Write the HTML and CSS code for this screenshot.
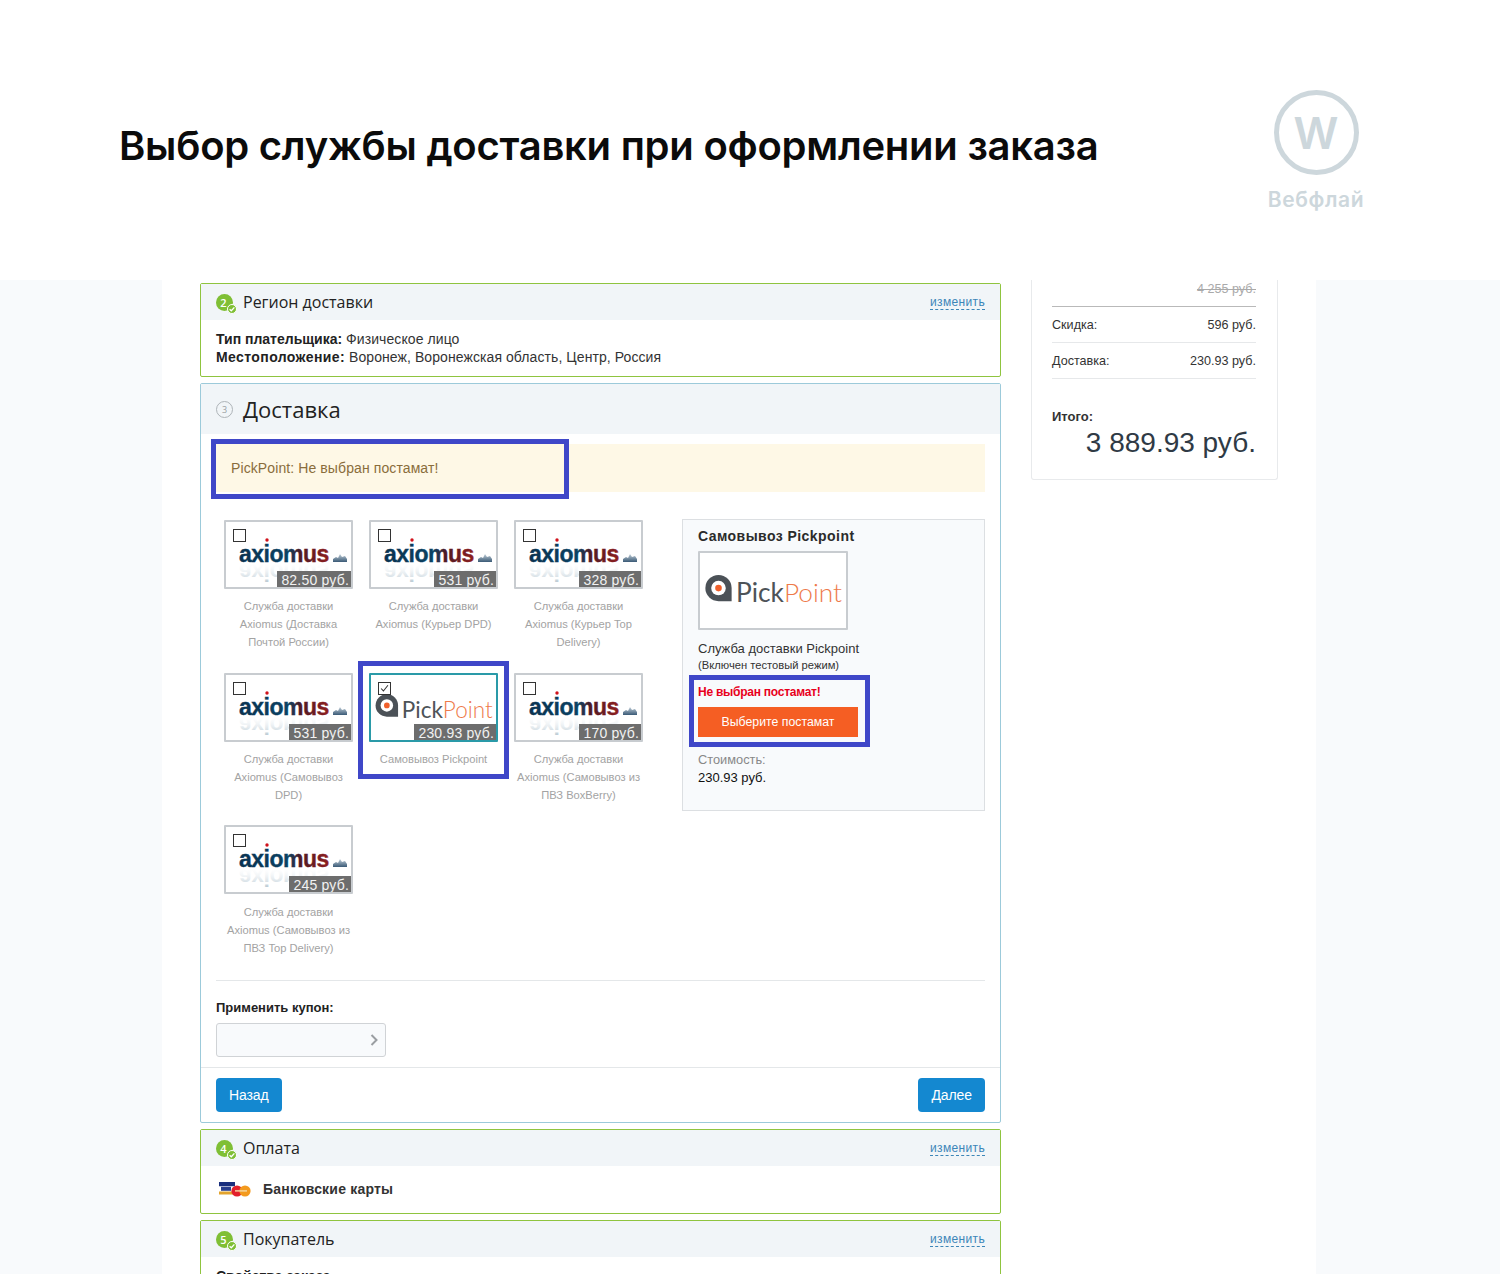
FILE: index.html
```html
<!DOCTYPE html>
<html lang="ru">
<head>
<meta charset="utf-8">
<title>Выбор службы доставки</title>
<link rel="stylesheet" href="styles.css">
</head>
<body>
<svg class="defs" width="0" height="0" aria-hidden="true">
  <defs>
    <linearGradient id="axg" x1="0" y1="0" x2="1" y2="0">
      <stop offset="0" stop-color="#0a3250"/>
      <stop offset=".55" stop-color="#0c4263"/>
      <stop offset=".68" stop-color="#4d1a24"/>
      <stop offset="1" stop-color="#8e1f1f"/>
    </linearGradient>
    <linearGradient id="axr" x1="0" y1="0" x2="0" y2="1">
      <stop offset="0" stop-color="#6b8ea3" stop-opacity=".6"/>
      <stop offset=".9" stop-color="#ffffff" stop-opacity="0"/>
    </linearGradient>
    <linearGradient id="axm" x1="0" y1="0" x2="0" y2="1">
      <stop offset="0" stop-color="#c3d0da"/>
      <stop offset="1" stop-color="#3a5a76"/>
    </linearGradient>
    <symbol id="axiomus" viewBox="0 0 125 65">
      <circle cx="41" cy="18" r="1.7" fill="#d0121b"/>
      <text class="ax-text" x="13" y="40" fill="url(#axg)" stroke="url(#axg)">axiomus</text>
      <text class="ax-text" x="13" y="-42" fill="url(#axr)" transform="scale(1,-1)">axiomus</text>
      <path d="M107 40v-3l3-2 2 1 2-4 2 3 3-1 2 3v3z" fill="url(#axm)"/>
    </symbol>
    <symbol id="pickpoint" viewBox="0 0 150 60">
      <path d="M19 14a13.500 13.500 0 1 0 0 27h13.500V27.500A13.500 13.500 0 0 0 19 14z" fill="#4b5157"/>
      <circle cx="19" cy="27.500" r="7.500" fill="#fff"/>
      <circle cx="19" cy="27.500" r="3.400" fill="#f0602b"/>
      <text class="pp-text" x="37" y="42"><tspan fill="#4d5358">Pick</tspan><tspan class="pp-light" fill="#ee7a4a">Point</tspan></text>
    </symbol>
  </defs>
</svg>
<div class="page">
  <header class="top">
    <h1 class="title">Выбор службы доставки при оформлении заказа</h1>
    <div class="brand">
      <div class="brand-ring"><span class="brand-w">W</span></div>
      <div class="brand-name">Вебфлай</div>
    </div>
  </header>
  <div class="shop">
    <div class="shop-inner">
      <main class="steps">
        <section class="panel done">
          <div class="panel-head">
            <span class="num num-ok">2<i class="ok"><svg viewBox="0 0 8 8"><path d="M1.6 4.2 3.3 5.8 6.4 2.4"/></svg></i></span>
            <span class="head-title">Регион доставки</span>
            <a class="change">изменить</a>
          </div>
          <div class="panel-body region">
            <div><b>Тип плательщика:</b> Физическое лицо</div>
            <div><b class="wide">Местоположение:</b> Воронеж, Воронежская область, Центр, Россия</div>
          </div>
        </section>

        <section class="panel active">
          <div class="panel-head big">
            <span class="num num-off">3</span>
            <span class="head-title">Доставка</span>
          </div>
          <div class="delivery">
            <div class="alert">PickPoint: Не выбран постамат!<span class="mark mark-alert"></span></div>
            <div class="choice">
              <div class="cards">
                <div class="item">
                  <div class="card"><span class="check"></span><svg class="logo"><use href="#axiomus"/></svg><span class="price">82.50 руб.</span></div>
                  <div class="caption">Служба доставки Axiomus (Доставка Почтой России)</div>
                </div>
                <div class="item">
                  <div class="card"><span class="check"></span><svg class="logo"><use href="#axiomus"/></svg><span class="price">531 руб.</span></div>
                  <div class="caption">Служба доставки Axiomus (Курьер DPD)</div>
                </div>
                <div class="item">
                  <div class="card"><span class="check"></span><svg class="logo"><use href="#axiomus"/></svg><span class="price">328 руб.</span></div>
                  <div class="caption">Служба доставки Axiomus (Курьер Top Delivery)</div>
                </div>
                <div class="item">
                  <div class="card"><span class="check"></span><svg class="logo"><use href="#axiomus"/></svg><span class="price">531 руб.</span></div>
                  <div class="caption">Служба доставки Axiomus (Самовывоз DPD)</div>
                </div>
                <div class="item">
                  <div class="card selected"><span class="check"><svg viewBox="0 0 13 13"><path d="M2.5 6.500 5.200 9.400 10.600 2.600"/></svg></span><svg class="logo"><use href="#pickpoint"/></svg><span class="price">230.93 руб.</span></div>
                  <div class="caption">Самовывоз Pickpoint</div>
                  <span class="mark mark-card"></span>
                </div>
                <div class="item">
                  <div class="card"><span class="check"></span><svg class="logo"><use href="#axiomus"/></svg><span class="price">170 руб.</span></div>
                  <div class="caption">Служба доставки Axiomus (Самовывоз из ПВЗ BoxBerry)</div>
                </div>
                <div class="item item-last">
                  <div class="card"><span class="check"></span><svg class="logo"><use href="#axiomus"/></svg><span class="price">245 руб.</span></div>
                  <div class="caption">Служба доставки Axiomus (Самовывоз из ПВЗ Top Delivery)</div>
                </div>
              </div>
              <aside class="info">
                <div class="info-title">Самовывоз Pickpoint</div>
                <div class="info-logo"><svg class="logo-lg"><use href="#pickpoint"/></svg></div>
                <div class="info-desc">Служба доставки Pickpoint</div>
                <div class="info-test">(Включен тестовый режим)</div>
                <div class="info-pick">
                  <div class="info-err">Не выбран постамат!</div>
                  <a class="orange">Выберите постамат</a>
                  <span class="mark mark-pick"></span>
                </div>
                <div class="info-cost">Стоимость:</div>
                <div class="info-sum">230.93 руб.</div>
              </aside>
            </div>
            <div class="coupon">
              <div class="coupon-label">Применить купон:</div>
              <div class="coupon-input"><svg viewBox="0 0 10 14"><path d="M2.500 2 7.500 7 2.500 12"/></svg></div>
            </div>
          </div>
          <div class="nav">
            <a class="btn">Назад</a>
            <a class="btn">Далее</a>
          </div>
        </section>

        <section class="panel done">
          <div class="panel-head">
            <span class="num num-ok">4<i class="ok"><svg viewBox="0 0 8 8"><path d="M1.6 4.2 3.3 5.8 6.4 2.4"/></svg></i></span>
            <span class="head-title">Оплата</span>
            <a class="change">изменить</a>
          </div>
          <div class="panel-body pay">
            <svg class="pay-logo" viewBox="0 0 34 16">
              <rect x="1" y="1" width="16" height="4.500" fill="#1a2f7e"/>
              <rect x="1" y="5.500" width="16" height="5" fill="#fff"/>
              <rect x="1" y="10.500" width="16" height="3" fill="#e2a32c"/>
              <rect x="3" y="5.800" width="10" height="4" fill="#2a3f8e"/>
              <circle cx="19" cy="10" r="5.600" fill="#e2202c"/>
              <circle cx="27" cy="10" r="5.600" fill="#f39a1e"/>
              <rect x="17" y="9.200" width="12" height="1.400" fill="#f6d9a5"/>
            </svg>
            <b>Банковские карты</b>
          </div>
        </section>

        <section class="panel done">
          <div class="panel-head">
            <span class="num num-ok">5<i class="ok"><svg viewBox="0 0 8 8"><path d="M1.6 4.2 3.3 5.8 6.4 2.4"/></svg></i></span>
            <span class="head-title">Покупатель</span>
            <a class="change">изменить</a>
          </div>
          <div class="panel-body region"><b>Свойства заказа</b></div>
        </section>
      </main>

      <aside class="total">
        <div class="row row-old"><s>4 255 руб.</s></div>
        <div class="row"><span>Скидка:</span><span>596 руб.</span></div>
        <div class="row"><span>Доставка:</span><span>230.93 руб.</span></div>
        <div class="total-label">Итого:</div>
        <div class="total-sum">3 889.93 руб.</div>
      </aside>
    </div>
  </div>
</div>
</body>
</html>
```

FILE: styles.css
```css
* { box-sizing: border-box; }
html, body { margin: 0; padding: 0; background: #fff; }
body { font-family: "Liberation Sans", Arial, sans-serif; color: #333; }
.defs { position: absolute; }
.page { width: 1500px; height: 1274px; overflow: hidden; }

.top { height: 280px; padding: 90px 134px 0 119px; display: flex; justify-content: space-between; align-items: flex-start; }
.title { margin: 30px 0 0; font-family: "Inter", "Noto Sans", sans-serif; font-size: 40px; line-height: 52px; font-weight: 600; color: #0b0b0b; letter-spacing: -.25px; white-space: nowrap; }
.brand { width: 100px; display: flex; flex-direction: column; align-items: center; }
.brand-ring { width: 85px; height: 85px; border: 5px solid #cdd7dc; border-radius: 50%; display: flex; align-items: center; justify-content: center; }
.brand-w { font-family: "Inter", sans-serif; font-weight: 600; font-size: 44px; line-height: 1; color: #cdd7dc; }
.brand-name { margin-top: 12px; font-family: "Inter", "Noto Sans", sans-serif; font-weight: 600; font-size: 21px; line-height: 26px; color: #cdd7dc; letter-spacing: .6px; white-space: nowrap; }

.shop { background: #f8fafc; height: 994px; padding-left: 162px; }
.shop-inner { width: 1154px; height: 100%; background: #fff; padding: 3px 0 0 38px; display: flex; align-items: flex-start; gap: 30px; }

.steps { width: 801px; flex: none; display: flex; flex-direction: column; gap: 6px; }
.panel { border: 1px solid #8fc43f; border-radius: 2px; background: #fff; }
.panel.active { border-color: #9ccada; }
.panel-head { height: 36px; background: #f1f5f8; display: flex; align-items: center; padding: 0 15px; }
.panel-head.big { height: 50px; }
.head-title { margin-left: 10px; font-family: "Open Sans", sans-serif; font-size: 16px; color: #222; }
.big .head-title { font-size: 22px; }
.change { margin-left: auto; font-size: 12px; letter-spacing: .35px; color: #3c86b8; border-bottom: 1px dashed #3c86b8; line-height: 14px; }

.num { position: relative; width: 17px; height: 17px; flex: none; border-radius: 50%; font-family: "Open Sans", sans-serif; font-size: 11px; font-weight: 600; line-height: 17px; text-align: center; }
.num-ok { background: #7fbf35; color: #fff; padding-right: 2px; }
.num-off { border: 1px solid #aeb4b8; color: #9a9fa3; font-weight: 400; font-size: 9px; line-height: 15px; }
.ok { position: absolute; right: -4px; bottom: -3px; width: 10px; height: 10px; border-radius: 50%; background: #7fbf35; border: 1px solid #fff; display: block; }
.ok svg { display: block; width: 8px; height: 8px; fill: none; stroke: #fff; stroke-width: 1.3; }

.panel-body { padding: 10px 15px 10px; font-size: 14px; line-height: 18px; }
.region { color: #333; height: 56px; letter-spacing: .08px; }
.region b { color: #222; letter-spacing: 0; }
.region b.wide { letter-spacing: .4px; }

.delivery { padding: 10px 15px 0; }
.alert { position: relative; height: 48px; padding-left: 15px; background: #fef8e6; color: #8a6d3b; font-size: 14px; letter-spacing: .1px; line-height: 48px; }
.mark { position: absolute; border: 5px solid #3f47c8; pointer-events: none; }
.mark-alert { left: -5px; top: -5px; width: 358px; height: 60px; }
.mark-card { left: -3px; top: -12px; width: 151px; height: 118px; }
.mark-pick { left: -9px; top: -10px; width: 181px; height: 72px; }

.choice { display: flex; justify-content: space-between; margin-top: 27px; border-bottom: 1px solid #e4e7e9; height: 462px; }
.cards { width: 435px; margin-top: 1px; display: grid; grid-template-columns: repeat(3, 145px); grid-auto-rows: 153px; }
.item { position: relative; padding: 0 8px; }
.item-last .card { margin-top: -1px; }
.item-last .caption { margin-top: 9px; }
.card { position: relative; height: 69px; border: 2px solid #c8ccd0; background: #fff; border-radius: 1px; overflow: hidden; }
.card.selected { border-color: #2a9aa8; }
.logo { display: block; width: 125px; height: 65px; }
.check { position: absolute; z-index: 1; left: 7px; top: 7px; width: 13px; height: 13px; border: 1px solid #333; background: #fff; }
.check svg { display: block; width: 11px; height: 11px; fill: none; stroke: #333; stroke-width: 1.2; }
.selected .check { background: transparent; }
.price { position: absolute; right: -2px; bottom: -2px; height: 18px; padding: 0 4px; background: #6d6d6d; color: #f2f2f2; font-size: 14px; letter-spacing: .2px; line-height: 18px; white-space: nowrap; }
.ax-text { font-family: "Liberation Sans", sans-serif; font-weight: 700; font-size: 23px; letter-spacing: -.5px; stroke-width: .35; }
.pp-text { font-family: "Lato", "Open Sans", sans-serif; font-weight: 400; font-size: 27px; }
.pp-light { font-weight: 300; }
.caption { margin-top: 8px; font-size: 11.150px; line-height: 18px; color: #a3a3a3; text-align: center; }

.info { width: 303px; height: 292px; margin-top: 0; padding: 8px 15px; background: #f8fafc; border: 1px solid #dcdfe2; }
.info-title { font-size: 14px; letter-spacing: .45px; line-height: 17px; font-weight: 700; color: #2b2b2b; }
.info-logo { width: 150px; height: 79px; margin-top: 6px; background: #fff; border: 2px solid #c8ccd0; border-radius: 1px; }
.logo-lg { display: block; width: 146px; height: 75px; }
.info-desc { margin-top: 11px; font-size: 13px; line-height: 16px; color: #333; }
.info-test { font-size: 11.200px; line-height: 17px; color: #333; }
.info-pick { position: relative; margin-top: 11px; }
.info-err { font-size: 12px; letter-spacing: -.25px; line-height: 15px; font-weight: 700; color: #e8001c; }
.orange { display: block; width: 160px; height: 30px; margin-top: 7px; background: #f55e23; color: #fff; font-size: 12.300px; line-height: 30px; text-align: center; }
.info-cost { margin-top: 14px; font-size: 12.800px; line-height: 18px; color: #888; }
.info-sum { font-size: 13px; line-height: 18px; color: #111; }

.coupon { padding-top: 18px; }
.coupon-label { font-size: 13px; line-height: 18px; font-weight: 700; color: #222; }
.coupon-input { width: 170px; height: 34px; margin-top: 6px; background: #f8fafc; border: 1px solid #d0d3d6; border-radius: 3px; display: flex; align-items: center; justify-content: flex-end; padding-right: 6px; }
.coupon-input svg { width: 10px; height: 14px; fill: none; stroke: #9a9ea2; stroke-width: 2; }

.nav { margin-top: 10px; padding: 10px 15px; border-top: 1px solid #e4e7e9; display: flex; justify-content: space-between; }
.btn { height: 34px; padding: 0 13px; background: #1488d0; border-radius: 4px; color: #fff; font-size: 14px; letter-spacing: -.1px; line-height: 34px; }

.pay { height: 47px; display: flex; align-items: center; padding: 0 17px 1px; }
.pay-logo { width: 34px; height: 16px; flex: none; margin-right: 11px; }
.pay b { color: #333; letter-spacing: .2px; }

.total { width: 247px; flex: none; height: 200px; margin-top: -3px; padding: 0 21px 0 20px; border: 1px solid #e8eaec; border-top: 0; border-radius: 0 0 3px 3px; font-size: 12.600px; color: #333; }
.row { height: 36px; display: flex; justify-content: space-between; align-items: center; border-bottom: 1px solid #e6e8ea; }
.row-old { height: 27px; justify-content: flex-end; padding-bottom: 9px; border-bottom-color: #b9b9b9; color: #aaa; }
.total-label { margin-top: 30px; font-size: 13px; line-height: 16px; font-weight: 700; color: #333; }
.total-sum { margin-top: 1px; font-size: 28px; line-height: 34px; text-align: right; color: #2f3a45; }
```
